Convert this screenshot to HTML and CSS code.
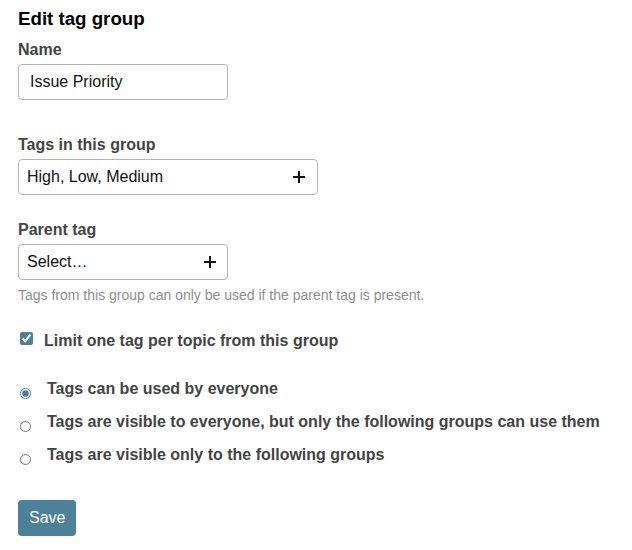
FILE: index.html
```html
<!DOCTYPE html>
<html lang="en">
  <head>
    <meta charset="UTF-8" />
    <meta name="viewport" content="width=device-width, initial-scale=1.0" />
    <title>Edit tag group</title>
    <link rel="stylesheet" href="styles.css">
  </head>
  <body>
    <form class="tag-group-form">
      <h2>Edit tag group</h2>

      <div class="field field-name">
        <label for="group-name">Name</label>
        <input id="group-name" class="text-input" type="text" value="Issue Priority" />
      </div>

      <div class="field field-tags">
        <label>Tags in this group</label>
        <div class="chooser chooser-wide">
          <span class="chooser-value">High, Low, Medium</span>
          <svg class="plus" width="12" height="12" viewBox="0 0 12 12"><path d="M6 0v12M0 6h12" stroke="#111" stroke-width="2"/></svg>
        </div>
      </div>

      <div class="field field-parent">
        <label>Parent tag</label>
        <div class="chooser">
          <span class="chooser-value">Select…</span>
          <svg class="plus" width="12" height="12" viewBox="0 0 12 12"><path d="M6 0v12M0 6h12" stroke="#111" stroke-width="2"/></svg>
        </div>
        <p class="help">Tags from this group can only be used if the parent tag is present.</p>
      </div>

      <label class="check-row">
        <input type="checkbox" checked />
        <span>Limit one tag per topic from this group</span>
      </label>

      <div class="radio-list">
        <label class="radio-row">
          <input type="radio" name="perm" checked />
          <span>Tags can be used by everyone</span>
        </label>
        <label class="radio-row">
          <input type="radio" name="perm" />
          <span>Tags are visible to everyone, but only the following groups can use them</span>
        </label>
        <label class="radio-row">
          <input type="radio" name="perm" />
          <span>Tags are visible only to the following groups</span>
        </label>
      </div>

      <button type="button" class="btn-save">Save</button>
    </form>
  </body>
</html>
```

FILE: styles.css
```css
body {
  margin: 0;
  padding: 8px 18px;
  font-family: "Liberation Sans", Arial, sans-serif;
  color: #222;
  background: #fff;
}

h2 {
  margin: 0 0 10px;
  font-size: 18.7px;
  line-height: 22px;
  color: #000;
}

.field label {
  display: block;
  font-size: 16px;
  font-weight: bold;
  line-height: 20px;
  color: #444;
  margin-bottom: 4px;
}

.field-name {
  margin-bottom: 35px;
}

.field-tags {
  margin-bottom: 25px;
}

.text-input {
  box-sizing: border-box;
  width: 210px;
  height: 36px;
  margin: 0;
  padding: 0 11px;
  border: 1px solid #b5b5b5;
  border-radius: 4px;
  font-family: inherit;
  font-size: 16px;
  color: #111;
  display: block;
}

.chooser {
  box-sizing: border-box;
  width: 210px;
  height: 36px;
  padding: 0 11px 0 8px;
  border: 1px solid #b5b5b5;
  border-radius: 4px;
  display: flex;
  align-items: center;
  justify-content: space-between;
  font-size: 16px;
  color: #111;
}

.chooser-wide {
  width: 300px;
  padding-right: 12px;
}

.chooser-value {
  margin-top: -1px;
}

.help {
  margin: 7px 0 0;
  font-size: 14px;
  line-height: 16px;
  color: #8f8f8f;
}

.check-row {
  display: flex;
  align-items: flex-start;
  margin-top: 28px;
  font-size: 16px;
  font-weight: bold;
  line-height: 20px;
  color: #444;
}

.check-row input {
  width: 13px;
  height: 13px;
  margin: 1px 11px 0 2px;
  accent-color: #4d7f99;
}

.radio-list {
  margin-top: 28px;
  display: flex;
  flex-direction: column;
  gap: 13px;
}

.radio-row {
  display: flex;
  align-items: flex-start;
  font-size: 16px;
  font-weight: bold;
  line-height: 20px;
  color: #444;
}

.radio-row input {
  width: 11px;
  height: 11px;
  margin: 9px 16px 0 2px;
  accent-color: #4d7f99;
}

.btn-save {
  margin-top: 35px;
  height: 36px;
  padding: 0 11px;
  border: 0;
  border-radius: 4px;
  background: #4d8099;
  color: #fff;
  font-family: inherit;
  font-size: 16px;
}
```
